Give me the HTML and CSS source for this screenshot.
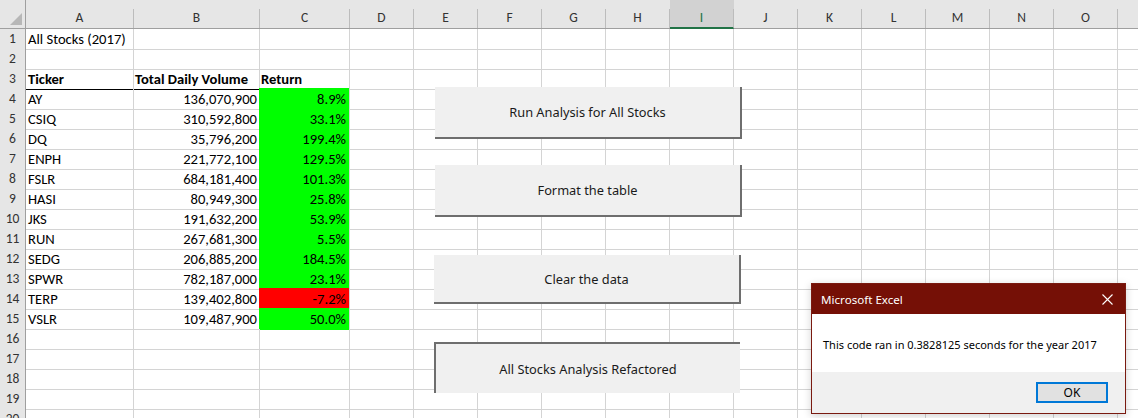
FILE: index.html
```html
<!DOCTYPE html>
<html>
<head>
<meta charset="utf-8">
<title>Excel - All Stocks</title>
<link rel="stylesheet" href="styles.css">
</head>
<body>
<div class="app">
  <div class="sheet">
    <div class="hrow">
      <div class="hc corner"><svg class="tri" width="12" height="12" viewBox="0 0 12 12"><polygon points="12,0 12,12 0,12" fill="#b7b7b7"/></svg></div>
      <div class="hc"><span class="lbl">A</span></div>
      <div class="hc"><span class="lbl">B</span></div>
      <div class="hc"><span class="lbl">C</span></div>
      <div class="hc"><span class="lbl">D</span></div>
      <div class="hc"><span class="lbl">E</span></div>
      <div class="hc"><span class="lbl">F</span></div>
      <div class="hc"><span class="lbl">G</span></div>
      <div class="hc"><span class="lbl">H</span></div>
      <div class="hc sel"><span class="lbl">I</span></div>
      <div class="hc"><span class="lbl">J</span></div>
      <div class="hc"><span class="lbl">K</span></div>
      <div class="hc"><span class="lbl">L</span></div>
      <div class="hc"><span class="lbl">M</span></div>
      <div class="hc"><span class="lbl">N</span></div>
      <div class="hc"><span class="lbl">O</span></div>
      <div class="hc last"><span class="lbl"></span></div>
    </div>

    <div class="row"><div class="rh">1</div><div class="c a">All Stocks (2017)</div><div class="c b"></div><div class="c cc"></div><div class="fill"></div></div>
    <div class="row"><div class="rh">2</div><div class="c a"></div><div class="c b"></div><div class="c cc"></div><div class="fill"></div></div>
    <div class="row"><div class="rh">3</div><div class="c a bold ul">Ticker</div><div class="c b bold ul left">Total Daily Volume</div><div class="c cc bold left">Return</div><div class="fill"></div></div>
    <div class="row"><div class="rh">4</div><div class="c a">AY</div><div class="c b">136,070,900</div><div class="c cc pos">8.9%</div><div class="fill"></div></div>
    <div class="row"><div class="rh">5</div><div class="c a">CSIQ</div><div class="c b">310,592,800</div><div class="c cc pos">33.1%</div><div class="fill"></div></div>
    <div class="row"><div class="rh">6</div><div class="c a">DQ</div><div class="c b">35,796,200</div><div class="c cc pos">199.4%</div><div class="fill"></div></div>
    <div class="row"><div class="rh">7</div><div class="c a">ENPH</div><div class="c b">221,772,100</div><div class="c cc pos">129.5%</div><div class="fill"></div></div>
    <div class="row"><div class="rh">8</div><div class="c a">FSLR</div><div class="c b">684,181,400</div><div class="c cc pos">101.3%</div><div class="fill"></div></div>
    <div class="row"><div class="rh">9</div><div class="c a">HASI</div><div class="c b">80,949,300</div><div class="c cc pos">25.8%</div><div class="fill"></div></div>
    <div class="row"><div class="rh">10</div><div class="c a">JKS</div><div class="c b">191,632,200</div><div class="c cc pos">53.9%</div><div class="fill"></div></div>
    <div class="row"><div class="rh">11</div><div class="c a">RUN</div><div class="c b">267,681,300</div><div class="c cc pos">5.5%</div><div class="fill"></div></div>
    <div class="row"><div class="rh">12</div><div class="c a">SEDG</div><div class="c b">206,885,200</div><div class="c cc pos">184.5%</div><div class="fill"></div></div>
    <div class="row"><div class="rh">13</div><div class="c a">SPWR</div><div class="c b">782,187,000</div><div class="c cc pos">23.1%</div><div class="fill"></div></div>
    <div class="row"><div class="rh">14</div><div class="c a">TERP</div><div class="c b">139,402,800</div><div class="c cc neg">-7.2%</div><div class="fill"></div></div>
    <div class="row"><div class="rh">15</div><div class="c a">VSLR</div><div class="c b">109,487,900</div><div class="c cc pos">50.0%</div><div class="fill"></div></div>
    <div class="row"><div class="rh">16</div><div class="c a"></div><div class="c b"></div><div class="c cc"></div><div class="fill"></div></div>
    <div class="row"><div class="rh">17</div><div class="c a"></div><div class="c b"></div><div class="c cc"></div><div class="fill"></div></div>
    <div class="row"><div class="rh">18</div><div class="c a"></div><div class="c b"></div><div class="c cc"></div><div class="fill"></div></div>
    <div class="row"><div class="rh">19</div><div class="c a"></div><div class="c b"></div><div class="c cc"></div><div class="fill"></div></div>
    <div class="row"><div class="rh">20</div><div class="c a"></div><div class="c b"></div><div class="c cc"></div><div class="fill"></div></div>
  </div>

  <div class="btn btn-run">Run Analysis for All Stocks</div>
  <div class="btn btn-format">Format the table</div>
  <div class="btn btn-clear">Clear the data</div>
  <div class="btn pressed btn-refactor">All Stocks Analysis Refactored</div>

  <div class="dialog">
    <div class="dlg-title">
      <span class="dlg-name">Microsoft Excel</span>
      <svg class="dlg-close" width="11" height="11" viewBox="0 0 11 11"><path d="M0.5 0.5 L10.5 10.5 M10.5 0.5 L0.5 10.5" stroke="#ffffff" stroke-width="1.1" fill="none"/></svg>
    </div>
    <div class="dlg-body">This code ran in 0.3828125 seconds for the year 2017</div>
    <div class="dlg-foot"><div class="ok">OK</div></div>
  </div>
</div>
</body>
</html>
```
FILE: styles.css
```css
* { box-sizing: border-box; }
html, body { margin: 0; padding: 0; background: #ffffff; }
body { width: 1138px; height: 418px; overflow: hidden; }

.app { position: relative; width: 1138px; height: 418px; overflow: hidden; }

.sheet {
  font-family: "Carlito", "Lato", "Liberation Sans", sans-serif;
  font-size: 14.6px;
  color: #000;
}

.hrow, .row {
  display: grid;
  grid-template-columns: 26px 108px 126px 90px 64px 64px 64px 64px 64px 64px 64px 64px 64px 64px 64px 64px 1fr;
}
.row { grid-template-columns: 26px 108px 126px 90px 1fr; height: 20px; }

.hrow { height: 29px; background: #e6e6e6; border-bottom: 1px solid #9f9f9f; }
.hc { display: flex; align-items: flex-end; }
.hc .lbl {
  flex: 1;
  height: 19px;
  line-height: 18px;
  text-align: center;
  font-size: 13.5px;
  color: #333;
  border-right: 1px solid #bcbcbc;
}
.hc.corner { border-right: 1px solid #9f9f9f; justify-content: flex-end; align-items: flex-end; padding: 0 3px 3px 0; }
.hc.corner .tri { display: block; }
.hc.sel { background: #d2d2d2; }
.hc.sel .lbl { color: #217346; border-bottom: 2px solid #217346; height: 20px; margin-bottom: -1px; border-right-color: #bcbcbc; }
.hc.last .lbl { border-right: none; }

.rh {
  background: #e6e6e6;
  border-right: 1px solid #9f9f9f;
  border-bottom: 1px solid #c8c8c8;
  text-align: center;
  font-size: 13.5px;
  line-height: 20px;
  color: #333;
}

.c {
  border-right: 1px solid #d4d4d4;
  border-bottom: 1px solid #d4d4d4;
  line-height: 20px;
  white-space: nowrap;
  overflow: visible;
}
.c.a { padding-left: 2px; text-align: left; }
.c.b { padding-right: 2px; text-align: right; }
.c.cc { padding-right: 3px; text-align: right; }
.c.left { text-align: left; padding-left: 1px; }
.c.bold { font-weight: 700; }
.c.ul { border-bottom-color: #000; }

.c.pos { background: #00ff00; border-bottom-color: #00ff00; box-shadow: -1px -1px 0 #00ff00; }
.c.neg { background: #ff0000; border-bottom-color: #ff0000; box-shadow: -1px -1px 0 #ff0000; }

.fill {
  border-bottom: 1px solid #d4d4d4;
  background: repeating-linear-gradient(to right, transparent 0, transparent 63px, #d4d4d4 63px, #d4d4d4 64px);
}

/* form buttons floating over the sheet */
.btn {
  position: absolute;
  display: flex;
  align-items: center;
  justify-content: center;
  background: #f0f0f0;
  font-family: "Noto Sans", "Open Sans", sans-serif;
  font-size: 12.8px;
  color: #1a1a1a;
  border-right: 2px solid #6e6e6e;
  border-bottom: 2px solid #6e6e6e;
}
.btn.pressed { border: none; border-left: 2px solid #6e6e6e; border-top: 2px solid #6e6e6e; }
.btn-run { left: 435px; top: 87px; width: 307px; height: 52px; }
.btn-format { left: 435px; top: 165px; width: 307px; height: 52px; }
.btn-clear { left: 434px; top: 255px; width: 307px; height: 49px; }
.btn-refactor { left: 434px; top: 342px; width: 306px; height: 51px; }

/* message box */
.dialog {
  position: absolute;
  left: 811px;
  top: 283px;
  width: 315px;
  height: 131px;
  border: 1px solid #7a1a10;
  background: #ffffff;
  display: flex;
  flex-direction: column;
  font-family: "Noto Sans", "Open Sans", sans-serif;
  font-size: 11px;
  box-shadow: 0 2px 8px rgba(0, 0, 0, 0.18);
}
.dlg-title {
  height: 30px;
  background: #751006;
  color: #ffffff;
  display: flex;
  align-items: center;
  justify-content: space-between;
  padding: 0 12px 0 9px;
  font-size: 11.6px;
}
.dlg-close { display: block; }
.dlg-body {
  flex: 1;
  display: flex;
  align-items: center;
  padding: 2px 0 0 11px;
  color: #000;
}
.dlg-foot {
  height: 41px;
  background: #f0f0f0;
  display: flex;
  justify-content: flex-end;
  align-items: flex-start;
  padding: 10px 17px 0 0;
}
.ok {
  width: 72px;
  height: 21px;
  border: 2px solid #0078d7;
  background: #e1e1e1;
  display: flex;
  align-items: center;
  justify-content: center;
  font-size: 12px;
  color: #000;
}
```
